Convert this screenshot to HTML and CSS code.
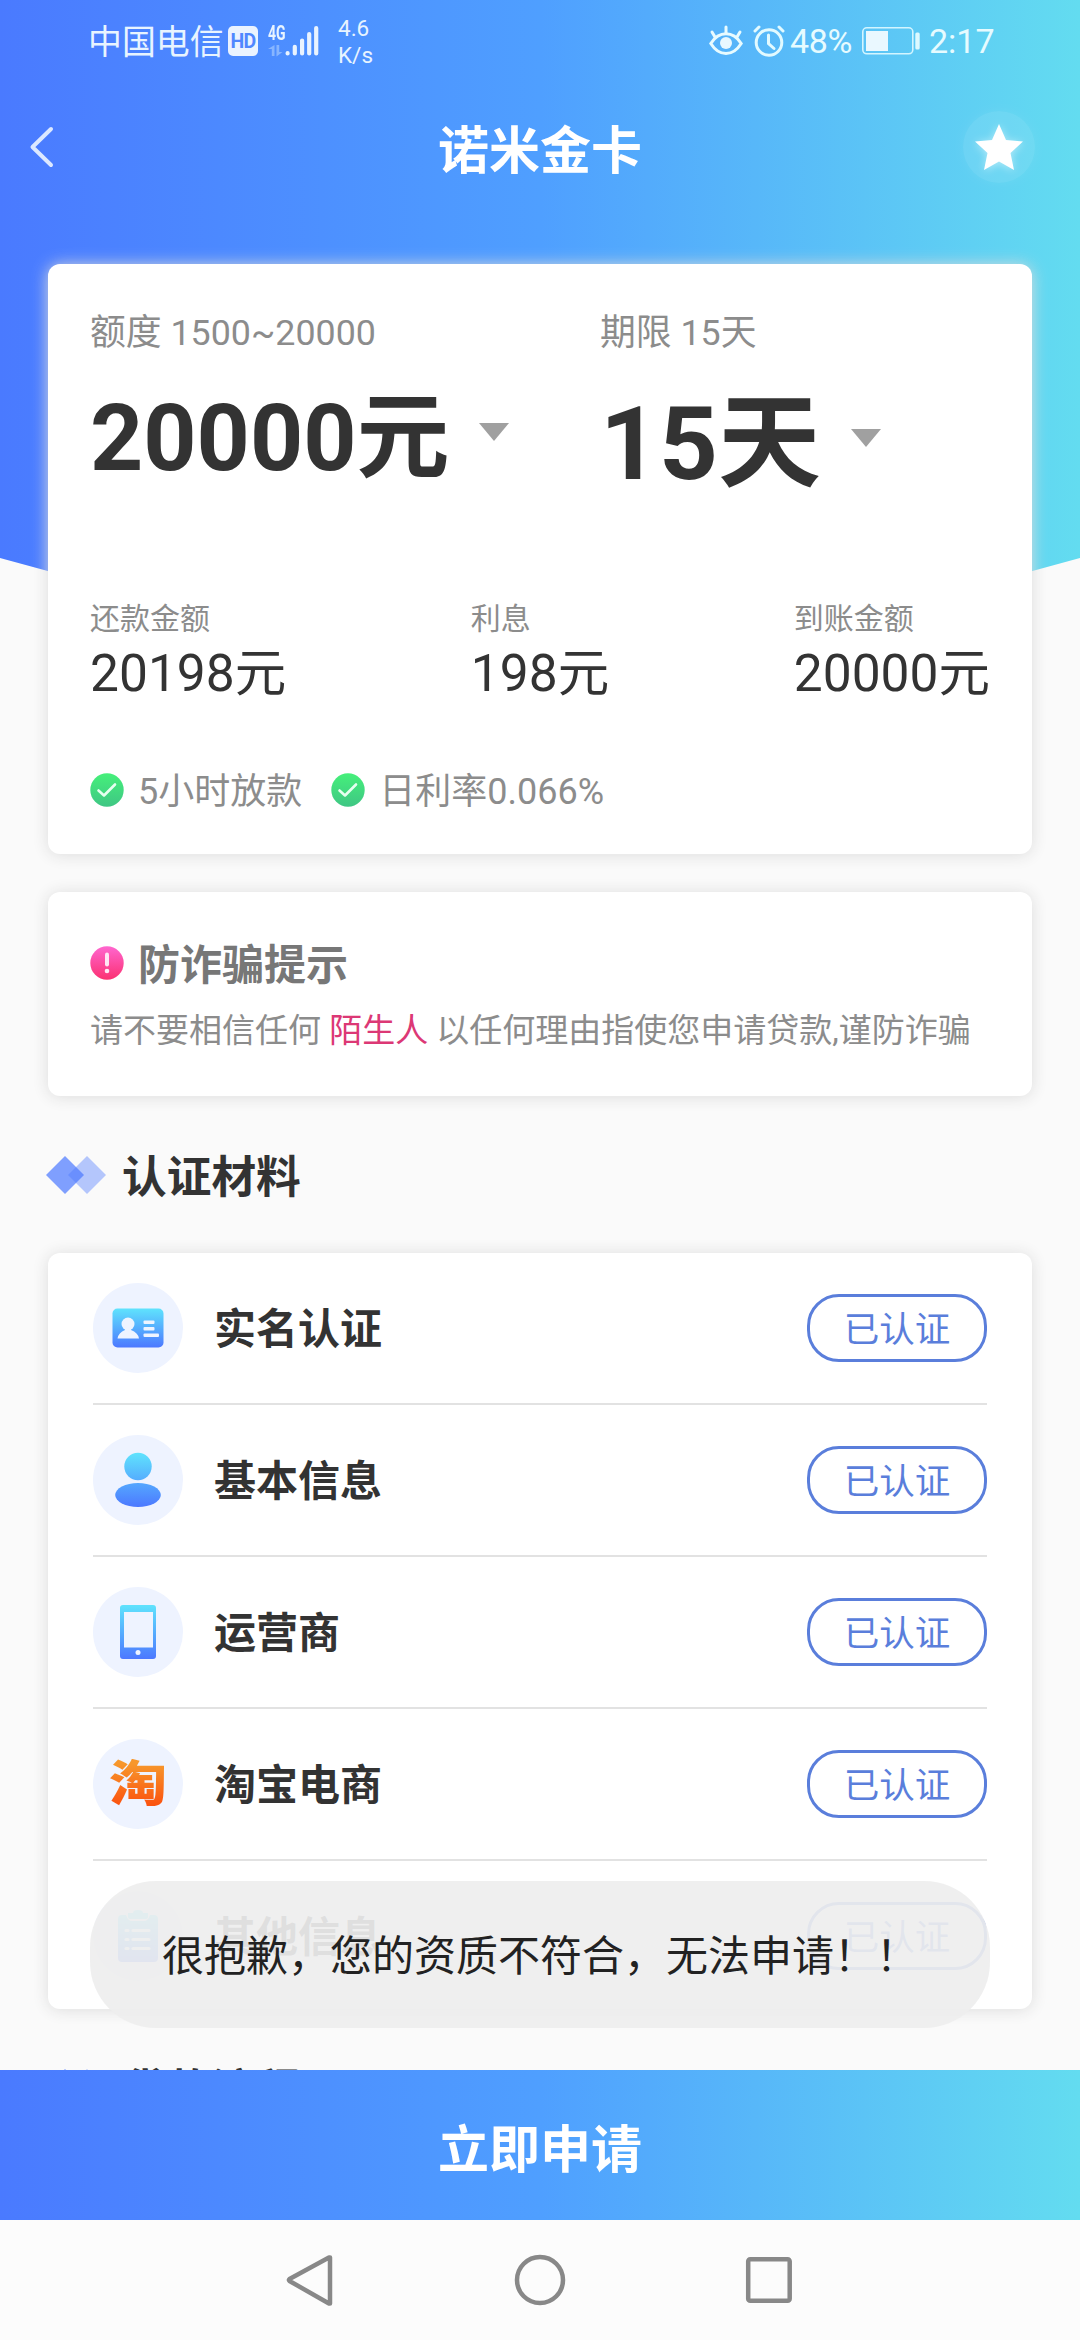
FILE: index.html
```html
<!DOCTYPE html>
<html lang="zh-CN">
<head>
<meta charset="utf-8">
<title>诺米金卡</title>
<link rel="stylesheet" href="styles.css">
</head>
<body>
<svg class="defs" width="0" height="0" aria-hidden="true">
  <defs>
    <linearGradient id="blue" x1="0" y1="0" x2="0" y2="1"><stop offset="0" stop-color="#5fe3fd"/><stop offset="1" stop-color="#4c78ff"/></linearGradient>
    <linearGradient id="blue-full" gradientUnits="userSpaceOnUse" x1="0" y1="18" x2="0" y2="72"><stop offset="0" stop-color="#5fe3fd"/><stop offset="1" stop-color="#4c78ff"/></linearGradient>
    <linearGradient id="green" x1="0" y1="0" x2="0" y2="1"><stop offset="0" stop-color="#45f07a"/><stop offset="1" stop-color="#3fc684"/></linearGradient>
    <linearGradient id="pink" x1="0" y1="0" x2="0" y2="1"><stop offset="0" stop-color="#ff66cf"/><stop offset="1" stop-color="#fb3172"/></linearGradient>
    <symbol id="tick" viewBox="0 0 34 34"><circle cx="17" cy="17" r="16.7" fill="url(#green)"/><path d="M8.5 17.5l5.5 5 11-11" fill="none" stroke="#e6fff0" stroke-width="2.6" stroke-linecap="round" stroke-linejoin="round"/></symbol>
    <symbol id="diamonds" viewBox="0 0 60 38"><path d="M41 0l19 19-19 19-19-19z" fill="#5f87ff" opacity=".45"/><path d="M19 0l19 19-19 19L0 19z" fill="#4a78ff" opacity=".7"/></symbol>
  </defs>
</svg>
<div class="phone">
  <main class="screen">
    <div class="backdrop"></div>
    <div class="status">
      <span class="carrier">中国电信</span>
      <span class="hd">HD</span>
      <span class="network">
        <span class="gen">4G</span>
        <svg class="bars" viewBox="0 0 51 32" width="51" height="32"><g stroke="#e9f3ff" stroke-width="4.2" stroke-linecap="round"><path d="M19.6 28.2v.3M26.8 21.8v6.7M34.1 15.5v13M41.2 9v19.500M48.200 3v25.500"/></g><g fill="#87b5ff"><path d="M6.500 20v11H3.800v-7H0zM8.500 20h2.700v7h3.300L8.500 31.500z"/></g></svg>
      </span>
      <span class="speed">4.6<br>K/s</span>
      <span class="status-right">
        <svg class="eye" viewBox="0 0 34 31" width="34" height="31" fill="none" stroke="#e8fbff" stroke-width="3"><path d="M1.800 18.500Q8 8.800 17 8.800t15.200 9.700Q26 28.500 17 28.500T1.800 18.500z"/><circle cx="17" cy="18" r="6" fill="#e8f8ff" stroke="none"/><path d="M17 2v6M3 7l3 5M31 7l-3 5" stroke-linecap="round"/></svg>
        <svg class="alarm" viewBox="0 0 32 32" width="32" height="32" fill="none" stroke="#e2faff" stroke-width="3"><circle cx="16" cy="17.500" r="12.800"/><path d="M15.500 10v8.500l5.500 5" stroke-linecap="round"/><path d="M2 6l4-4M30 6l-4-4" stroke-linecap="round"/></svg>
        <span class="percent">48%</span>
        <svg class="battery" viewBox="0 0 58 28" width="58" height="28"><rect x=".8" y=".8" width="50" height="26" rx="4" fill="none" stroke="#d3f5ff" stroke-width="1.600"/><rect x="4" y="4" width="22" height="20" fill="#eaf8ff"/><rect x="53.300" y="5.500" width="4.400" height="17" rx="1.500" fill="#dcf9ff"/></svg>
        <span class="time">2:17</span>
      </span>
    </div>
    <header class="titlebar">
      <svg class="back" viewBox="0 0 26 42" width="26" height="42"><path d="M22 3L3.500 21 22 39" fill="none" stroke="#dce8ff" stroke-width="4" stroke-linecap="round" stroke-linejoin="round"/></svg>
      <h1>诺米金卡</h1>
      <span class="favorite"><svg viewBox="0 0 48 46" width="48" height="46"><path d="M24 0l7 16 17 1.500-12.500 11.500L39 46l-15-8.500L9 46l3.500-17L0 17.500 17 16z" fill="#fff"/></svg></span>
    </header>

    <section class="card loan">
      <div class="picks">
        <div class="pick">
          <div class="hint">额度 1500~20000</div>
          <div class="choice amount">20000元<i class="caret"></i></div>
        </div>
        <div class="pick">
          <div class="hint">期限 15天</div>
          <div class="choice term">15天<i class="caret"></i></div>
        </div>
      </div>
      <div class="figures">
        <div><div class="label">还款金额</div><div class="value">20198元</div></div>
        <div><div class="label">利息</div><div class="value">198元</div></div>
        <div><div class="label">到账金额</div><div class="value">20000元</div></div>
      </div>
      <div class="perks">
        <svg class="dot"><use href="#tick"/></svg><span class="perk">5小时放款</span>
        <svg class="dot"><use href="#tick"/></svg><span class="perk">日利率0.066%</span>
      </div>
    </section>

    <section class="card notice">
      <div class="notice-title">
        <svg class="dot" viewBox="0 0 34 34"><circle cx="17" cy="17" r="16.700" fill="url(#pink)"/><path d="M17 8.500v10" stroke="#ffe6f4" stroke-width="4" stroke-linecap="round"/><circle cx="17" cy="25" r="2.300" fill="#ffe6f4"/></svg>
        <h2>防诈骗提示</h2>
      </div>
      <p>请不要相信任何 <em>陌生人</em> 以任何理由指使您申请贷款,谨防诈骗</p>
    </section>

    <div class="section"><svg class="diamonds"><use href="#diamonds"/></svg><h2>认证材料</h2></div>

    <section class="card list">
      <div class="item">
        <span class="icon"><svg viewBox="0 0 90 90"><rect x="19.500" y="25.500" width="51" height="39" rx="5" fill="url(#blue)"/><g fill="#eef4ff"><circle cx="35" cy="41" r="6.500"/><path d="M32 44h6v3q7 2.500 8 8.500H24.500q1-6 7.500-8.500z"/><rect x="50.500" y="37.500" width="11" height="3.500" rx="1"/><rect x="50.500" y="44" width="11" height="3.500" rx="1"/><rect x="50.500" y="50.500" width="15.500" height="3.500" rx="1"/></g></svg></span>
        <span class="name">实名认证</span><span class="badge">已认证</span>
      </div>
      <div class="item">
        <span class="icon"><svg viewBox="0 0 90 90"><ellipse cx="45" cy="31.500" rx="13.700" ry="13.700" fill="url(#blue-full)"/><ellipse cx="45" cy="60" rx="22.800" ry="12" fill="url(#blue-full)"/></svg></span>
        <span class="name">基本信息</span><span class="badge">已认证</span>
      </div>
      <div class="item">
        <span class="icon"><svg viewBox="0 0 90 90"><path fill-rule="evenodd" d="M30 18h30q3 0 3 3v48q0 3-3 3H30q-3 0-3-3V21q0-3 3-3zM31 25v35.500h29V25z" fill="url(#blue)"/><circle cx="45" cy="65.500" r="2.500" fill="#eef4ff"/></svg></span>
        <span class="name">运营商</span><span class="badge">已认证</span>
      </div>
      <div class="item">
        <span class="icon"><b class="tao">淘</b></span>
        <span class="name">淘宝电商</span><span class="badge">已认证</span>
      </div>
      <div class="item">
        <span class="icon"><svg viewBox="0 0 90 90"><path d="M29 24h4q2 6 6 6h12q4 0 6-6h4q4 0 4 4v39q0 4-4 4H29q-4 0-4-4V28q0-4 4-4z" fill="url(#blue)"/><path d="M35 22h5q0-3 5-3t5 3h5v4q0 2-3 2H38q-3 0-3-2z" fill="#5fe0fd"/><path d="M33 39.500h2M40 39.500h16M33 48.500h2M40 48.500h16M33 57.500h2M40 57.500h16" stroke="#eef4ff" stroke-width="3.200" stroke-linecap="round"/></svg></span>
        <span class="name">其他信息</span><span class="badge">已认证</span>
      </div>
    </section>

    <div class="section"><svg class="diamonds"><use href="#diamonds"/></svg><h2>贷款流程</h2></div>

    <div class="toast">很抱歉，您的资质不符合，无法申请！！</div>
  </main>

  <button class="apply">立即申请</button>

  <nav class="keys">
    <svg viewBox="0 0 54 54"><path d="M46 4.500v46q0 0-1 0L5.500 28q-1-1 0-2L45 4.500z"/></svg>
    <svg viewBox="0 0 54 54"><circle cx="27" cy="27" r="23"/></svg>
    <svg viewBox="0 0 54 54"><rect x="6.200" y="6.200" width="41.500" height="41.500" rx="2"/></svg>
  </nav>
</div>
</body>
</html>
```
FILE: styles.css
```css
* { box-sizing: border-box; margin: 0; padding: 0; }

body {
  font-family: Roboto, "Noto Sans CJK SC", sans-serif;
  color: #333;
  background: #fafafa;
}

h1, h2 { font-weight: 700; }
svg { display: block; flex: none; }
.defs { position: absolute; }

.phone {
  display: flex;
  flex-direction: column;
  width: 1080px;
  height: 2340px;
  overflow: hidden;
}

.screen {
  position: relative;
  isolation: isolate;
  height: 2070px;
  overflow: hidden;
}

.backdrop {
  position: absolute;
  inset: 0 0 auto;
  z-index: -1;
  height: 705px;
  background: linear-gradient(90deg, #4a7aff, #4f9fff 50%, #63dcf0);
  clip-path: polygon(0 0, 100% 0, 100% 558px, 50% 100%, 0 558px);
}

/* status bar */
.status {
  display: flex;
  align-items: center;
  height: 81px;
  padding: 0 86px 0 88px;
  color: #e8f4ff;
}
.carrier { padding-top: 4px; font-size: 33.900px; line-height: 40px; width: 140px; white-space: nowrap; }
.hd {
  width: 30px;
  height: 30px;
  border-radius: 5px;
  background: #eaf3ff;
  color: #4f87ff;
  font: 700 19.500px/31px Roboto, sans-serif;
  letter-spacing: -0.8px;
  text-align: center;
}
.network { position: relative; width: 51px; height: 32px; margin-left: 10px; }
.gen {
  position: absolute;
  left: 0;
  top: -2px;
  font: 700 20px/20px Roboto, sans-serif;
  transform: scaleX(.7);
  transform-origin: 0 0;
}
.speed { margin-left: 19px; font-size: 22.500px; line-height: 27px; padding-top: 2px; }
.status-right { display: flex; align-items: center; margin-left: auto; font-size: 34px; line-height: 40px; color: #e6fbff; }
.alarm { margin-left: 10px; }
.percent { width: 62px; margin-left: 5px; letter-spacing: -0.400px; }
.battery { margin: 0 9px 0 10px; }
.time { width: 65px; }

/* title bar */
.titlebar {
  display: grid;
  grid-template-columns: 1fr auto 1fr;
  align-items: center;
  height: 132px;
  margin-bottom: 51px;
  padding: 0 45px 0 29px;
}
.titlebar h1 { margin-left: 16px; padding-top: 9px; font-size: 51px; line-height: 60px; color: #fff; }
.favorite {
  justify-self: end;
  display: grid;
  place-items: center;
  width: 72px;
  height: 72px;
  border-radius: 50%;
  background: rgba(255, 255, 255, .09);
  box-shadow: 0 0 14px rgba(255, 255, 255, .07);
}
.favorite svg { filter: drop-shadow(0 1px 4px rgba(255, 255, 255, .5)); }

/* cards */
.card {
  margin: 0 48px;
  border-radius: 12px;
  background: #fff;
  box-shadow: 0 1px 16px #dcdcdc;
}
.loan { height: 590px; padding: 45px 42px 0; }
.picks { display: grid; grid-template-columns: 510px 1fr; height: 292px; }
.hint { font-size: 35.800px; line-height: 48px; color: #8c8c8c; }
.choice { display: flex; align-items: center; margin-top: 26px; font-weight: 700; line-height: 1.2; }
.amount { font-size: 92.900px; }
.term { font-size: 102.800px; }
.caret {
  margin: -13px 0 0 30px;
  border: solid transparent;
  border-width: 18px 15.500px 0;
  border-top-color: #a0a0a0;
}
.figures { display: flex; justify-content: space-between; }
.label { margin-bottom: 6px; font-size: 30px; line-height: 36px; color: #8c8c8c; }
.value { font-size: 51.500px; line-height: 62px; }
.perks { display: flex; align-items: center; margin-top: 63px; font-size: 36px; line-height: 48px; color: #8c8c8c; }
.dot { width: 34px; height: 34px; margin: -4px 14px 0 0; }
.perk { margin-right: 29px; }

.notice { height: 204px; margin-top: 38px; padding: 44px 42px 0; }
.notice-title { display: flex; align-items: center; color: #777; }
.notice-title .dot { margin-top: -6px; }
.notice-title h2 { font-size: 42px; line-height: 60px; }
.notice p { margin-top: 11px; font-size: 33px; line-height: 48px; color: #8c8c8c; white-space: nowrap; }
.notice em { font-style: normal; color: #dc3875; }

.section { display: flex; align-items: center; height: 157px; padding-left: 46px; }
.diamonds { width: 60px; height: 38px; margin-right: 16px; }
.section h2 { padding-top: 6px; font-size: 44.700px; line-height: 60px; }

.list { height: 756px; padding: 0 45px; }
.item { display: flex; align-items: center; height: 152px; border-bottom: 2px solid #e2e2e2; }
.item:last-child { border-bottom: 0; height: 150px; }
.icon { display: grid; place-items: center; width: 90px; height: 90px; border-radius: 50%; background: #eef3ff; }
.icon svg { width: 90px; height: 90px; }
.tao {
  font-size: 58px;
  line-height: 60px;
  font-weight: 900;
  color: transparent;
  background: linear-gradient(#f7972b 10%, #fb5410 90%);
  background-clip: text;
  transform: scaleY(.84);
}
.name { margin-left: 31px; padding-top: 4px; font-size: 42px; line-height: 60px; font-weight: 700; }
.badge {
  width: 180px;
  height: 68px;
  margin: -1px 0 0 auto;
  border: 3px solid #5a7edb;
  border-radius: 32px;
  font-size: 35.500px;
  line-height: 66px;
  text-align: center;
  color: #5a7edb;
}

.toast {
  position: absolute;
  left: 90px;
  top: 1881px;
  width: 900px;
  height: 147px;
  padding-left: 72px;
  border-radius: 66px;
  background: rgba(238, 238, 238, .92);
  font-size: 42px;
  line-height: 152px;
  color: #222;
  white-space: nowrap;
}

.apply {
  height: 150px;
  padding-top: 12px;
  border: 0;
  background: linear-gradient(90deg, #4a7aff, #4f9fff 50%, #63dcf0);
  font: 700 51px/60px Roboto, "Noto Sans CJK SC", sans-serif;
  color: #fff;
}

.keys {
  display: flex;
  justify-content: center;
  gap: 175px;
  height: 120px;
  padding-top: 33px;
  background: #fcfcfc;
}
.keys svg { width: 54px; height: 54px; fill: none; stroke: #888; stroke-width: 4.500; stroke-linejoin: round; }
```
